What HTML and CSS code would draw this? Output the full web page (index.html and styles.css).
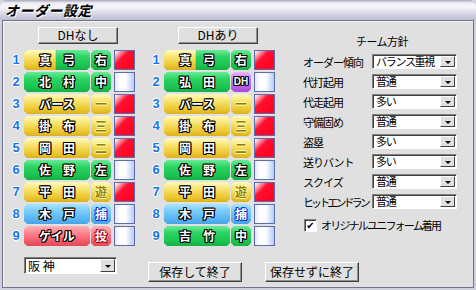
FILE: index.html
```html
<!DOCTYPE html>
<html lang="ja">
<head>
<meta charset="UTF-8">
<title>オーダー設定</title>
<link rel="stylesheet" href="styles.css">
</head>
<body>
<div class="window">
  <div class="titlebar"><span class="title">オーダー設定</span></div>
  <div class="panel">
    <div class="main">
      <div class="lineup">
        <div class="btn btn-dh">DHなし</div>
        <ol class="rows">
          <li class="row"><span class="num">1</span><span class="name split">真　弓</span><span class="pos green">右</span><span class="mark red"></span></li>
          <li class="row"><span class="num">2</span><span class="name green">北　村</span><span class="pos green">中</span><span class="mark"></span></li>
          <li class="row"><span class="num">3</span><span class="name yellow">バース</span><span class="pos yellow">一</span><span class="mark red"></span></li>
          <li class="row"><span class="num">4</span><span class="name yellow">掛　布</span><span class="pos yellow">三</span><span class="mark red"></span></li>
          <li class="row"><span class="num">5</span><span class="name yellow">岡　田</span><span class="pos yellow">二</span><span class="mark red"></span></li>
          <li class="row"><span class="num">6</span><span class="name green">佐　野</span><span class="pos green">左</span><span class="mark"></span></li>
          <li class="row"><span class="num">7</span><span class="name yellow">平　田</span><span class="pos yellow">遊</span><span class="mark red"></span></li>
          <li class="row"><span class="num">8</span><span class="name blue">木　戸</span><span class="pos blue">捕</span><span class="mark"></span></li>
          <li class="row"><span class="num">9</span><span class="name pink">ゲイル</span><span class="pos pink">投</span><span class="mark"></span></li>
        </ol>
      </div>
      <div class="lineup">
        <div class="btn btn-dh">DHあり</div>
        <ol class="rows">
          <li class="row"><span class="num">1</span><span class="name split">真　弓</span><span class="pos green">右</span><span class="mark red"></span></li>
          <li class="row"><span class="num">2</span><span class="name green">弘　田</span><span class="pos purple">DH</span><span class="mark"></span></li>
          <li class="row"><span class="num">3</span><span class="name yellow">バース</span><span class="pos yellow">一</span><span class="mark red"></span></li>
          <li class="row"><span class="num">4</span><span class="name yellow">掛　布</span><span class="pos yellow">三</span><span class="mark red"></span></li>
          <li class="row"><span class="num">5</span><span class="name yellow">岡　田</span><span class="pos yellow">二</span><span class="mark red"></span></li>
          <li class="row"><span class="num">6</span><span class="name green">佐　野</span><span class="pos green">左</span><span class="mark"></span></li>
          <li class="row"><span class="num">7</span><span class="name yellow">平　田</span><span class="pos yellow">遊</span><span class="mark red"></span></li>
          <li class="row"><span class="num">8</span><span class="name blue">木　戸</span><span class="pos blue">捕</span><span class="mark"></span></li>
          <li class="row"><span class="num">9</span><span class="name green">吉　竹</span><span class="pos green">中</span><span class="mark"></span></li>
        </ol>
      </div>
      <div class="policy">
        <div class="policy-title">チーム方針</div>
        <div class="opts">
          <div class="opt"><span class="label">オーダー傾向</span><div class="combo"><span class="val">バランス重視</span><span class="arrow"></span></div></div>
          <div class="opt"><span class="label">代打起用</span><div class="combo"><span class="val">普通</span><span class="arrow"></span></div></div>
          <div class="opt"><span class="label">代走起用</span><div class="combo"><span class="val">多い</span><span class="arrow"></span></div></div>
          <div class="opt"><span class="label">守備固め</span><div class="combo"><span class="val">普通</span><span class="arrow"></span></div></div>
          <div class="opt"><span class="label">盗塁</span><div class="combo"><span class="val">多い</span><span class="arrow"></span></div></div>
          <div class="opt"><span class="label">送りバント</span><div class="combo"><span class="val">多い</span><span class="arrow"></span></div></div>
          <div class="opt"><span class="label">スクイズ</span><div class="combo"><span class="val">普通</span><span class="arrow"></span></div></div>
          <div class="opt"><span class="label tight">ヒットエンドラン</span><div class="combo"><span class="val">普通</span><span class="arrow"></span></div></div>
        </div>
        <label class="check"><span class="box">✔</span><span class="check-text">オリジナルユニフォーム着用</span></label>
      </div>
    </div>
    <div class="footer">
      <div class="combo team"><span class="val">阪 神</span><span class="arrow"></span></div>
      <div class="btn btn-save btn-first">保存して終了</div>
      <div class="btn btn-save btn-second">保存せずに終了</div>
    </div>
  </div>
</div>
</body>
</html>
```

FILE: styles.css
```css
* { box-sizing: border-box; }
body { margin: 0; background: #d4d4de; font-family: "Noto Sans CJK JP", "Noto Sans", sans-serif; font-size: 12px; color: #000; }

.window {
    width: 476px;
    height: 290px;
    background: #cfcfdb;
    padding: 0 2px 2px 2px;
    display: flex;
    flex-direction: column;
    border-radius: 6px 6px 0 0;
    overflow: hidden;
}

.titlebar {
    height: 20px;
    margin: 0 -2px;
    padding: 2px 5px;
    background: linear-gradient(#a8a8bc 0, #eeeef4 3px, #f6f6fa 7px, #d6d6e4 14px, #bcbcd0 20px);
    border-radius: 6px 6px 0 0;
}
.title {
    font-size: 14px;
    font-weight: bold;
    font-style: italic;
    line-height: 16px;
    letter-spacing: 0.5px;
    text-shadow: 1px 1px 0 #fff;
}

.panel {
    flex: 1;
    background: #e0e0e0;
    border: 1px solid #72728a;
    box-shadow: inset 1px 1px #f4f4f4;
    padding: 6px 0 0 5px;
}

.main { display: flex; height: 219px; }

/* lineup columns */
.lineup { width: 140px; flex: none; display: flex; flex-direction: column; }

.btn {
    background: #e0e0e0;
    border: 1px solid;
    border-color: #fff #404040 #404040 #fff;
    box-shadow: inset -1px -1px #909090;
    text-align: center;
    font-size: 12px;
}
.btn-dh { width: 80px; height: 17px; line-height: 14px; margin: 0 auto; }

.rows { list-style: none; margin: 6px 0 0 0; padding: 0; display: flex; flex-direction: column; gap: 2px; }
.row { display: flex; height: 20px; align-items: stretch; }

.num {
    width: 16px;
    text-align: center;
    font-family: "Liberation Sans", sans-serif;
    font-weight: bold;
    font-size: 13px;
    line-height: 20px;
    color: #1a74e6;
    text-shadow: 1px 0 #fff, -1px 0 #fff, 0 1px #fff, 0 -1px #fff;
}

.name, .pos {
    clip-path: polygon(3px 0, calc(100% - 3px) 0, 100% 3px, 100% calc(100% - 3px), calc(100% - 3px) 100%, 3px 100%, 0 calc(100% - 3px), 0 3px);
    text-align: center;
    font-weight: bold;
    line-height: 20px;
    color: #fff;
    text-shadow: 1px 0 #000, -1px 0 #000, 0 1px #000, 0 -1px #000, 1px 1px #000, -1px -1px #000, 1px -1px #000, -1px 1px #000;
}
.name { width: 66px; margin-right: 1px; font-size: 12px; }
.pos { width: 20px; margin-right: 3px; font-size: 12px; }

.yellow { background: linear-gradient(#fffbc0, #f8e470 35%, #ecc832 75%, #dcb020); }
.green { background: linear-gradient(#68eb98, #2ad462 35%, #1cc450 75%, #14b044); }
.blue { background: linear-gradient(#a8e4ff, #78ccfa 35%, #58b4f2 75%, #48a4e8); }
.pink { background: linear-gradient(#ffb0b8, #ff8490 35%, #f25a6a 75%, #e04858); }
.purple { background: linear-gradient(#eab4ff, #d282f4 35%, #bc5ce6 75%, #a848d8); }
.split {
    background:
        linear-gradient(#fffbc0, #f8e470 35%, #ecc832 75%, #dcb020) 0 0 / 48% 100% no-repeat,
        linear-gradient(#68eb98, #2ad462 35%, #1cc450 75%, #14b044);
}

.pos.yellow { color: #908000; text-shadow: 1px 0 #fff8b0, -1px 0 #fff8b0, 0 1px #fff8b0, 0 -1px #fff8b0; }
.pos.blue { text-shadow: 1px 0 #0030d0, -1px 0 #0030d0, 0 1px #0030d0, 0 -1px #0030d0, 1px 1px #0030d0, -1px -1px #0030d0; }
.pos.pink { text-shadow: 1px 0 #a00010, -1px 0 #a00010, 0 1px #a00010, 0 -1px #a00010, 1px 1px #a00010, -1px -1px #a00010; }
.pos.purple { font-family: "Liberation Sans", sans-serif; font-size: 10px; }

.mark {
    width: 21px;
    border: 1px solid #5c6cac;
    background: linear-gradient(90deg, #dfe8fa, #fff 25%, #fff 55%, #b8ccf2);
}
.mark.red { background: linear-gradient(135deg, #fff 0, #ff9aa6 18%, #ff1030 38%, #ff0020); }

/* team policy */
.policy { flex: 1; min-width: 0; padding: 6px 0 0 15px; display: flex; flex-direction: column; }
.policy-title { text-align: center; line-height: 16px; margin: 0 0 5px 0; padding-right: 12px; font-size: 11px; letter-spacing: -0.5px; }
.opts { display: flex; flex-direction: column; gap: 5px; }
.opt { display: flex; align-items: center; height: 15px; }
.label { width: 69px; flex: none; white-space: nowrap; font-size: 11px; letter-spacing: -1px; }
.label.tight { letter-spacing: -2.9px; }

.combo {
    width: 85px;
    height: 15px;
    flex: none;
    display: flex;
    background: #fff;
    border: 1px solid;
    border-color: #808080 #fff #fff #808080;
    box-shadow: inset 1px 1px #404040;
}
.combo .val { flex: 1; min-width: 0; padding: 0 0 0 3px; line-height: 13px; font-size: 11px; letter-spacing: -1.3px; white-space: nowrap; }
.combo .arrow {
    width: 15px;
    flex: none;
    margin: 1px;
    background: #e0e0e0;
    border: 1px solid;
    border-color: #fff #404040 #404040 #fff;
    display: flex;
    align-items: center;
    justify-content: center;
}
.combo .arrow::after {
    content: "";
    border-left: 3px solid transparent;
    border-right: 3px solid transparent;
    border-top: 3px solid #000;
    margin-top: 1px;
}

.check { display: flex; align-items: center; margin: 9px 0 0 1px; gap: 4px; line-height: 14px; }
.check .box {
    width: 13px;
    height: 13px;
    flex: none;
    background: #fff;
    border: 1px solid;
    border-color: #808080 #fff #fff #808080;
    box-shadow: inset 1px 1px #404040;
    font-size: 10px;
    line-height: 11px;
    text-align: center;
    font-family: "DejaVu Sans", sans-serif;
}
.check-text { white-space: nowrap; font-size: 11px; letter-spacing: -1.8px; }

/* bottom */
.footer { display: flex; align-items: flex-start; }
.combo.team { width: 93px; height: 17px; margin: 11px 0 0 16px; }
.combo.team .val { line-height: 15px; font-size: 12px; letter-spacing: 0; }
.btn-save { width: 94px; height: 20px; line-height: 17px; margin-top: 16px; }
.btn-first { margin-left: 31px; }
.btn-second { margin-left: 23px; }
```
